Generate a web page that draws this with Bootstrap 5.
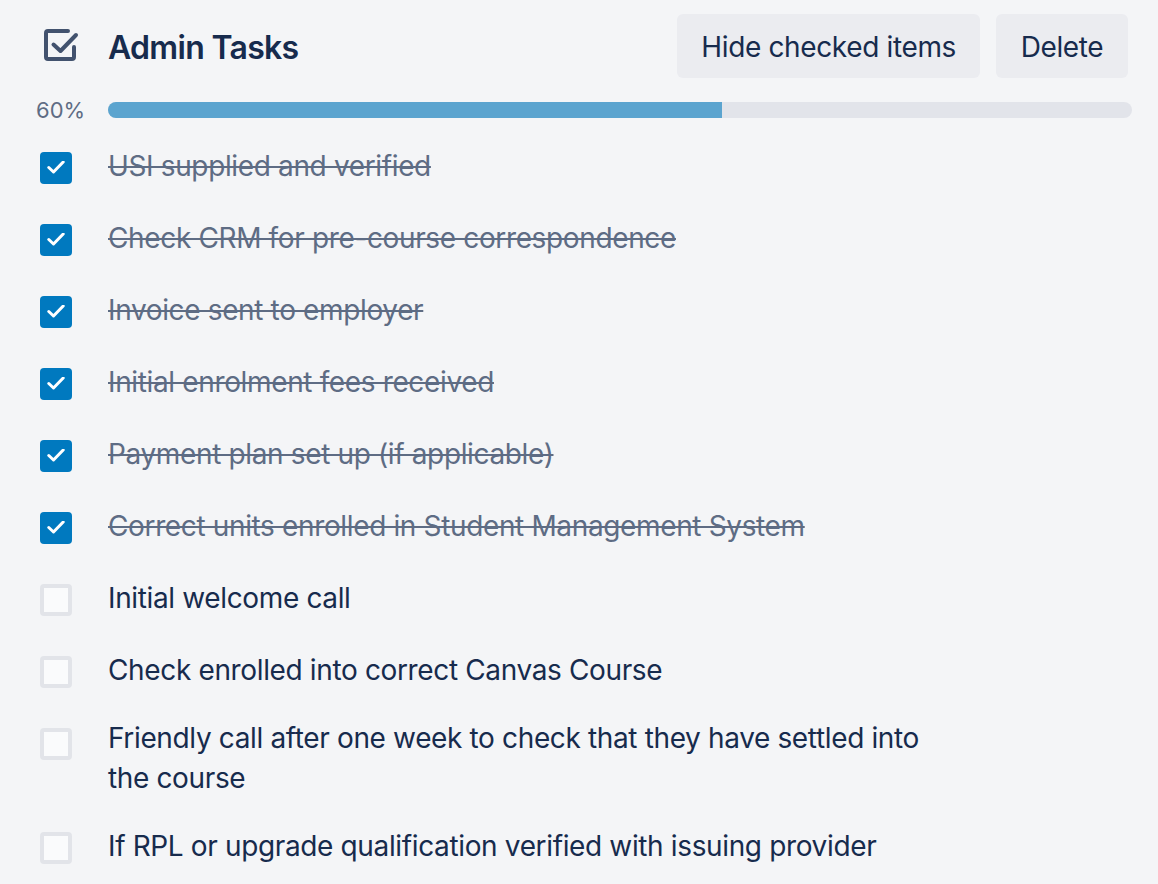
<!DOCTYPE html>
<html lang="en">
<head>
<meta charset="utf-8">
<title>Admin Tasks</title>
<link href="https://cdn.jsdelivr.net/npm/bootstrap@5.3.0/dist/css/bootstrap.min.css" rel="stylesheet">
<style>
html,body{height:884px;overflow:hidden}
body{background:#f4f5f7;color:#172b4d;font-family:Inter,"Liberation Sans",sans-serif;font-size:28px;line-height:40px;letter-spacing:-.36px}
.wrap{padding:14px 30px 0 40px}
.head-row{height:64px}
.ico-col{width:68px;flex:none;padding-left:4px}
.title-text{font-size:32px;font-weight:600;line-height:40px;margin:4px 0 0;color:#172b4d;letter-spacing:-.7px}
.act-btn{background:#ebecf0;color:#172b4d;border:0;border-radius:6px;height:64px;padding:2px 24px 0;font-size:28px;line-height:40px;letter-spacing:-.36px}
.act-btn:hover{background:#dfe1e6;color:#172b4d}
.act-del{min-width:132px}
.prog-row{height:16px;margin-top:24px;margin-right:-4px}
.pct-text{font-size:22px;color:#5e6c84;line-height:16px;width:72px;flex:none;margin-left:-4px;letter-spacing:0}
.prog-track{height:16px;background:#e2e4ea;border-radius:8px;flex-grow:1}
.prog-track .progress-bar{background:#5ba4cf}
.task-row{padding:12px 0;min-height:72px}
.task-list{margin-top:12px}
.box{width:32px;height:32px;border-radius:4px;flex:none;margin-top:10px;margin-right:36px;display:flex;align-items:center;justify-content:center}
.box-on{background:#0079bf}
.box-off{background:#fafbfc;border:4px solid #e2e4e9}
.task-text{max-width:830px;align-self:center}
.done .task-text{color:#5e6c84;text-decoration:line-through}
</style>
</head>
<body>
<div class="wrap">
  <div class="d-flex align-items-center head-row">
    <div class="ico-col d-flex">
      <svg width="36" height="34" viewBox="0 0 36 34" class="d-block overflow-visible" fill="none" stroke="#42526e" stroke-width="4" stroke-linecap="round"><path d="M24 2H4a2 2 0 0 0-2 2v24a2 2 0 0 0 2 2h24a2 2 0 0 0 2-2V18"/><path d="M9.500 15.500l7 6.500L32 6" stroke-linejoin="round"/></svg>
    </div>
    <h2 class="title-text flex-grow-1">Admin Tasks</h2>
    <div class="d-flex gap-3">
      <button type="button" class="btn act-btn">Hide checked items</button>
      <button type="button" class="btn act-btn act-del">Delete</button>
    </div>
  </div>
  <div class="d-flex align-items-center prog-row">
    <span class="pct-text">60%</span>
    <div class="progress prog-track" role="progressbar" aria-valuenow="60" aria-valuemin="0" aria-valuemax="100">
      <div class="progress-bar" style="width:60%"></div>
    </div>
  </div>
  <div class="task-list">
    <div class="d-flex task-row done"><span class="box box-on"><svg width="18" height="14" viewBox="0 0 18 14" fill="none" stroke="#fff" stroke-width="3" stroke-linecap="round" stroke-linejoin="round"><path d="M1.800 6.500l4.700 4.500L16.200 1"/></svg></span><span class="task-text">USI supplied and verified</span></div>
    <div class="d-flex task-row done"><span class="box box-on"><svg width="18" height="14" viewBox="0 0 18 14" fill="none" stroke="#fff" stroke-width="3" stroke-linecap="round" stroke-linejoin="round"><path d="M1.800 6.500l4.700 4.500L16.200 1"/></svg></span><span class="task-text">Check CRM for pre-course correspondence</span></div>
    <div class="d-flex task-row done"><span class="box box-on"><svg width="18" height="14" viewBox="0 0 18 14" fill="none" stroke="#fff" stroke-width="3" stroke-linecap="round" stroke-linejoin="round"><path d="M1.800 6.500l4.700 4.500L16.200 1"/></svg></span><span class="task-text">Invoice sent to employer</span></div>
    <div class="d-flex task-row done"><span class="box box-on"><svg width="18" height="14" viewBox="0 0 18 14" fill="none" stroke="#fff" stroke-width="3" stroke-linecap="round" stroke-linejoin="round"><path d="M1.800 6.500l4.700 4.500L16.200 1"/></svg></span><span class="task-text">Initial enrolment fees received</span></div>
    <div class="d-flex task-row done"><span class="box box-on"><svg width="18" height="14" viewBox="0 0 18 14" fill="none" stroke="#fff" stroke-width="3" stroke-linecap="round" stroke-linejoin="round"><path d="M1.800 6.500l4.700 4.500L16.200 1"/></svg></span><span class="task-text">Payment plan set up (if applicable)</span></div>
    <div class="d-flex task-row done"><span class="box box-on"><svg width="18" height="14" viewBox="0 0 18 14" fill="none" stroke="#fff" stroke-width="3" stroke-linecap="round" stroke-linejoin="round"><path d="M1.800 6.500l4.700 4.500L16.200 1"/></svg></span><span class="task-text">Correct units enrolled in Student Management System</span></div>
    <div class="d-flex task-row"><span class="box box-off"></span><span class="task-text">Initial welcome call</span></div>
    <div class="d-flex task-row"><span class="box box-off"></span><span class="task-text">Check enrolled into correct Canvas Course</span></div>
    <div class="d-flex task-row"><span class="box box-off"></span><span class="task-text">Friendly call after one week to check that they have settled into the course</span></div>
    <div class="d-flex task-row"><span class="box box-off"></span><span class="task-text">If RPL or upgrade qualification verified with issuing provider</span></div>
  </div>
</div>
</body>
</html>
